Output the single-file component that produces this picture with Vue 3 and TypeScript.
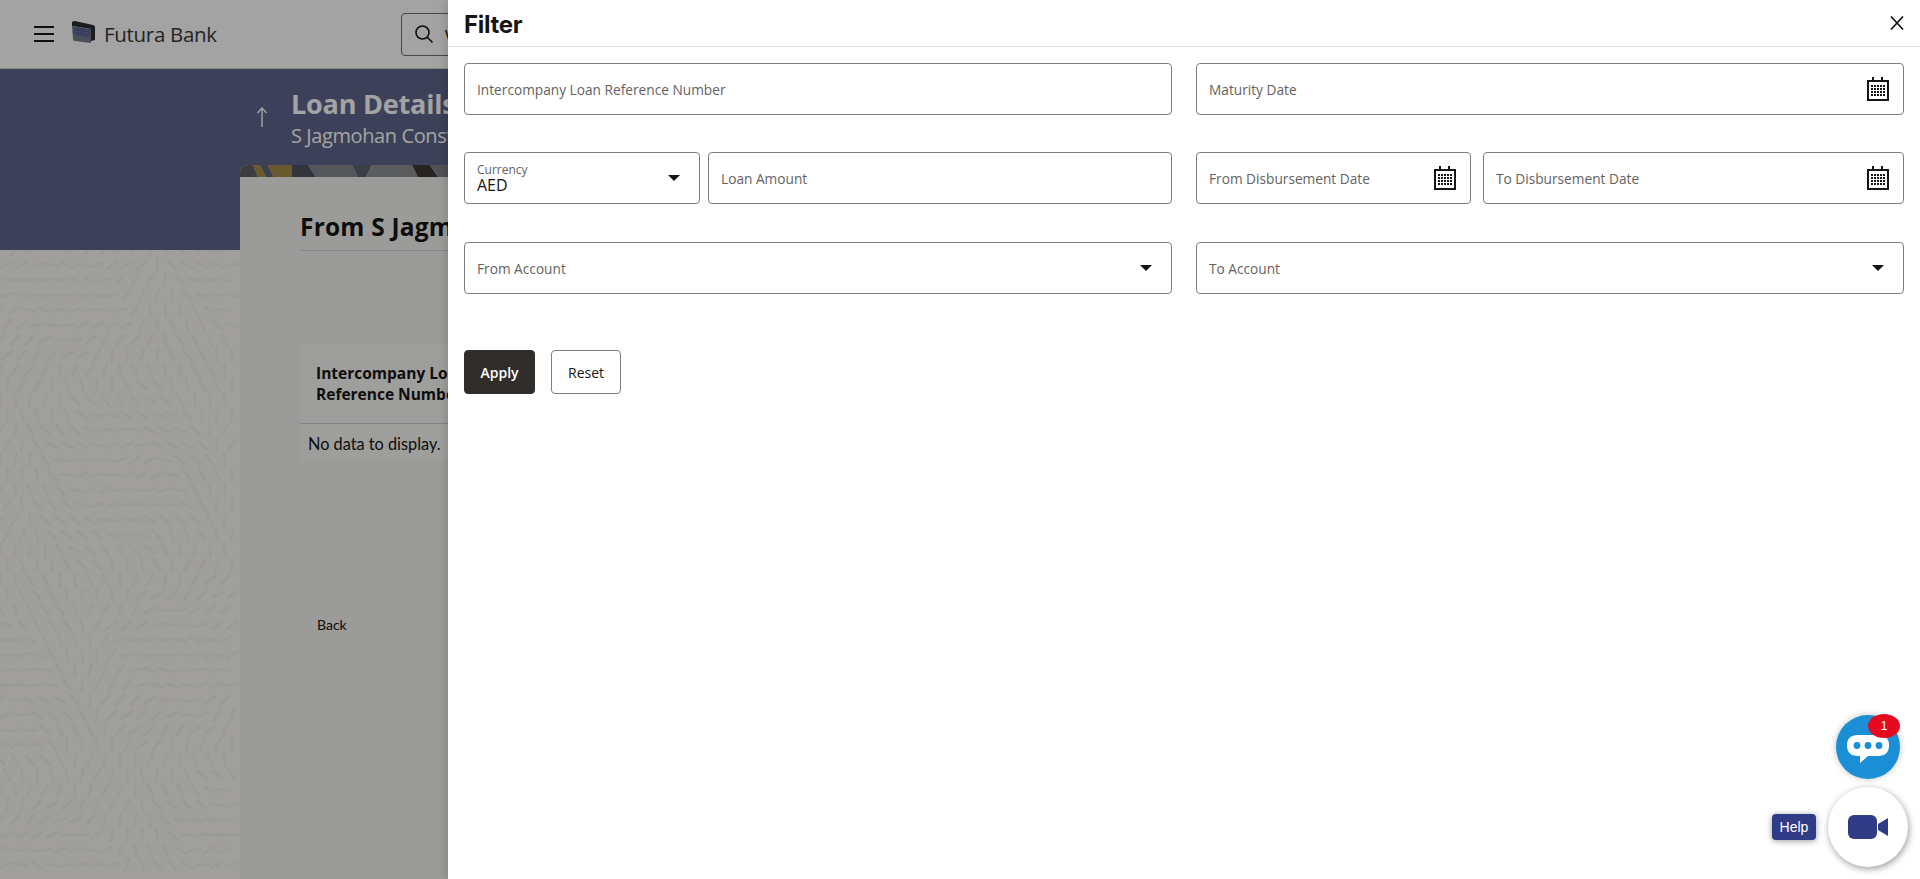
<script setup lang="ts">
const dots: number[][] = [];
for (const y of [8, 11, 14, 17]) for (const x of [4, 7, 10, 13, 16]) dots.push([x, y]);
const logoDots: number[][] = [];
for (let r = 0; r < 4; r++) for (let c = 0; c < 8; c++) logoDots.push([2 + c * 2.1 + (r % 2), 8 + r * 2 + c * 0.3]);
const stripes = [
  { p: '0,0 13,0 18,12 0,12', c: '#5d6069' },
  { p: '13,0 20,0 26,12 18,12', c: '#a68c4a' },
  { p: '20,0 28,0 34,12 26,12', c: '#5f6572' },
  { p: '28,0 52,0 52,12 34,12', c: '#a68c4a' },
  { p: '52,0 68,0 76,12 52,12', c: '#50545f' },
  { p: '68,0 112,0 118,12 76,12', c: '#85878c' },
  { p: '112,0 132,0 126,12 118,12', c: '#5e626d' },
  { p: '132,0 172,0 178,12 126,12', c: '#8f9094' },
  { p: '172,0 190,0 198,12 178,12', c: '#3c3835' },
  { p: '190,0 230,0 230,12 198,12', c: '#7e8085' }
];

// Swirling leaf texture of the page background: short strokes along a slowly turning flow field.
function buildTexture(width: number, height: number): string {
  const parts: string[] = [];
  const step = 15;
  let row = 0;
  for (let y = 0; y < height; y += step) {
    for (let x = (row % 2) * 7; x < width; x += step) {
      const jitter = Math.sin(x * 12.9 + y * 78.2) * 0.35;
      const a = 1.5 + 1.1 * Math.sin(x / 55 + y / 90) + 0.8 * Math.cos(y / 48 - x / 80) + jitter;
      const dx = Math.cos(a) * 6;
      const dy = Math.sin(a) * 6;
      parts.push(`M${(x - dx).toFixed(1)} ${(y - dy).toFixed(1)}l${(2 * dx).toFixed(1)} ${(2 * dy).toFixed(1)}`);
    }
    row++;
  }
  return parts.join('');
}
const texture = buildTexture(240, 630);
</script>

<template>
  <div class="page">
    <svg class="texture" viewBox="0 0 240 630" width="240" height="630">
      <path :d="texture" fill="none" stroke="#f2f1ed" stroke-width="3" stroke-linecap="round" />
    </svg>

    <header class="topbar">
      <div class="burger"><i></i><i></i><i></i></div>
      <svg class="logo" viewBox="0 0 24 24" width="24" height="24">
        <path d="M0 2 Q1 1 3 1 L21 5 Q23 5.5 23 7 L23 20 L19 21 L19 9 L0 6Z" fill="#2d2d30" />
        <path d="M0 6 L19 9 L19 23 L3 21 Q1 21 1 19Z" fill="#767b8a" />
        <circle v-for="d in logoDots" :key="d.join()" :cx="d[0]" :cy="d[1]" r=".8" fill="#3f4aa0" />
      </svg>
      <span class="brand">Futura Bank</span>
      <div class="search">
        <svg viewBox="0 0 20 20" width="20" height="20" fill="none" stroke="#161513" stroke-width="1.6">
          <circle cx="8.5" cy="8.5" r="6.5" />
          <path d="M13.2 13.2 L18.5 18.5" />
        </svg>
        <span class="search-text">What would you like to do today?</span>
      </div>
    </header>

    <section class="hero">
      <svg class="back-arrow" viewBox="0 0 12 20" width="12" height="20" fill="none" stroke="#fff" stroke-width="1.4">
        <path d="M6 20 V1 M1.5 6 L6 1 L10.5 6" />
      </svg>
      <div>
        <h1>Loan Details</h1>
        <p>S Jagmohan Constructions Pvt Ltd</p>
      </div>
    </section>

    <main class="card">
      <svg class="stripe" viewBox="0 0 230 12" width="230" height="12">
        <polygon v-for="s in stripes" :key="s.p" :points="s.p" :fill="s.c" />
      </svg>
      <div class="card-body">
        <h2>From S Jagmohan Constructions Pvt Ltd</h2>
        <table class="grid">
          <thead>
            <tr><th>Intercompany Loan<br />Reference Number</th></tr>
          </thead>
          <tbody>
            <tr><td>No data to display.</td></tr>
          </tbody>
        </table>
        <a class="back">Back</a>
      </div>
    </main>

    <div class="overlay"></div>

    <aside class="panel">
      <div class="panel-head">
        <span class="panel-title">Filter</span>
        <svg class="close" viewBox="0 0 14 14" width="14" height="14" fill="none" stroke="#161513" stroke-width="1.7">
          <path d="M1 0.5 L13 13.5 M13 0.5 L1 13.5" />
        </svg>
      </div>
      <form class="form">
        <div class="row">
          <label class="field"><span class="ph">Intercompany Loan Reference Number</span></label>
          <label class="field">
            <span class="ph">Maturity Date</span>
            <svg class="cal" viewBox="0 0 22 24" width="22" height="24">
              <path fill-rule="evenodd" d="M0 3 H5 V0 H7 V3 H14 V0 H16 V3 H22 V24 H0Z M2 5 V22 H20 V5Z" fill="#161513" />
              <rect v-for="d in dots" :key="d.join()" :x="d[0]" :y="d[1]" width="2" height="2" fill="#161513" />
            </svg>
          </label>
        </div>
        <div class="row">
          <div class="pair pair-left">
            <label class="field currency">
              <span class="small">Currency</span>
              <span class="value">AED</span>
              <i class="caret"></i>
            </label>
            <label class="field"><span class="ph">Loan Amount</span></label>
          </div>
          <div class="pair pair-right">
            <label class="field from-date">
              <span class="ph">From Disbursement Date</span>
              <svg class="cal" viewBox="0 0 22 24" width="22" height="24">
                <path fill-rule="evenodd" d="M0 3 H5 V0 H7 V3 H14 V0 H16 V3 H22 V24 H0Z M2 5 V22 H20 V5Z" fill="#161513" />
                <rect v-for="d in dots" :key="d.join()" :x="d[0]" :y="d[1]" width="2" height="2" fill="#161513" />
              </svg>
            </label>
            <label class="field">
              <span class="ph">To Disbursement Date</span>
              <svg class="cal" viewBox="0 0 22 24" width="22" height="24">
                <path fill-rule="evenodd" d="M0 3 H5 V0 H7 V3 H14 V0 H16 V3 H22 V24 H0Z M2 5 V22 H20 V5Z" fill="#161513" />
                <rect v-for="d in dots" :key="d.join()" :x="d[0]" :y="d[1]" width="2" height="2" fill="#161513" />
              </svg>
            </label>
          </div>
        </div>
        <div class="row">
          <label class="field"><span class="ph">From Account</span><i class="caret"></i></label>
          <label class="field"><span class="ph">To Account</span><i class="caret"></i></label>
        </div>
        <div class="actions">
          <button type="button" class="btn primary">Apply</button>
          <button type="button" class="btn reset">Reset</button>
        </div>
      </form>
    </aside>

    <div class="chat">
      <svg viewBox="0 0 42 32" width="42" height="32">
        <path d="M11 0 H31 Q42 0 42 10 Q42 21 31 21 H21 L13 28 V21 H11 Q0 21 0 10 Q0 0 11 0Z" fill="#fff" />
        <circle cx="10" cy="10.5" r="3.4" fill="#1a8fd6" />
        <circle cx="21" cy="10.5" r="3.4" fill="#1a8fd6" />
        <circle cx="32" cy="10.5" r="3.4" fill="#1a8fd6" />
      </svg>
      <span class="badge">1</span>
    </div>
    <div class="video">
      <svg viewBox="0 0 40 24" width="40" height="24">
        <rect x="0" y="0" width="29" height="24" rx="6" fill="#303c86" />
        <path d="M30 9 L40 3 V21 L30 15Z" fill="#303c86" />
      </svg>
    </div>
    <span class="help">Help</span>
  </div>
</template>

<style scoped>
.page {
  position: relative;
  isolation: isolate;
  width: 1920px;
  height: 879px;
  overflow: hidden;
  font-family: Lato, "Liberation Sans", sans-serif;
  color: #161513;
  background-color: #faf9f5;
}
.texture {
  position: absolute;
  left: 0;
  top: 250px;
  z-index: -1;
}
.topbar {
  height: 68px;
  display: flex;
  align-items: center;
  background: #fff;
  border-bottom: 1px solid #d8d8d8;
  padding-left: 34px;
}
.burger {
  width: 20px;
  display: flex;
  flex-direction: column;
  gap: 5px;
}
.burger i {
  display: block;
  height: 2px;
  background: #161513;
}
.logo {
  margin-left: 18px;
  margin-top: -4px;
}
.brand {
  margin-left: 8px;
  font-size: 20.5px;
  color: #3a3836;
  font-family: "Open Sans", sans-serif;
  letter-spacing: -0.3px;
}
.search {
  margin-left: 184px;
  width: 480px;
  height: 43px;
  box-sizing: border-box;
  border: 1px solid #6f6f6f;
  border-radius: 4px;
  display: flex;
  align-items: center;
  gap: 11px;
  padding-left: 12px;
  font-size: 14px;
}
.hero {
  height: 181px;
  box-sizing: border-box;
  background: #5f678b;
  padding: 18px 0 0 256px;
  display: flex;
  color: #fff;
}
.back-arrow {
  margin: 20px 23px 0 0;
}
.hero h1 {
  margin: 0;
  font-size: 27px;
  line-height: 34px;
  font-weight: 700;
  font-family: "Open Sans", sans-serif;
  letter-spacing: -0.2px;
}
.hero p {
  margin: 0;
  font-size: 20px;
  line-height: 30px;
  font-family: "Open Sans", sans-serif;
  letter-spacing: -0.4px;
}
.card {
  margin: -85px 0 0 240px;
  width: 1440px;
  height: 714px;
  background: #f2f2f0;
  border-radius: 8px 8px 0 0;
  overflow: hidden;
}
.stripe {
  display: block;
}
.card-body {
  padding: 31px 60px 0;
}
.card h2 {
  margin: 0;
  font-size: 24.5px;
  line-height: 38px;
  font-weight: 700;
  font-family: "Open Sans", sans-serif;
  letter-spacing: 0.2px;
  padding-bottom: 4px;
  border-bottom: 1px solid #d2d2d2;
  white-space: nowrap;
}
.grid {
  margin-top: 93px;
  border-collapse: collapse;
  background: #f7f7f5;
  font-size: 16.3px;
  width: 400px;
}
.grid th {
  text-align: left;
  height: 79px;
  padding: 0 16px;
  line-height: 21px;
  font-size: 15.5px;
  font-weight: 700;
  font-family: "Open Sans", sans-serif;
  border-bottom: 1px solid #cfcfcf;
}
.grid td {
  height: 37px;
  padding: 2px 8px 0;
  box-sizing: border-box;
}
.back {
  display: block;
  margin: 155px 0 0 17px;
  font-size: 14px;
}
.overlay {
  position: absolute;
  inset: 0;
  background: rgba(0, 0, 0, 0.36);
}
.panel {
  position: absolute;
  top: 0;
  right: 0;
  bottom: 0;
  width: 1472px;
  background: #fff;
  box-shadow: -3px 0 8px rgba(0, 0, 0, 0.12);
}
.panel-head {
  height: 46px;
  border-bottom: 1px solid #e4e4e4;
  padding: 0 16px;
  display: flex;
  align-items: center;
  justify-content: space-between;
}
.panel-title {
  font-size: 24px;
  font-weight: 700;
  font-family: Inter, sans-serif;
  letter-spacing: -0.3px;
  margin-top: 2px;
}
.close {
  margin-top: -1px;
}
.form {
  padding: 16px 16px 0 16px;
}
.row {
  display: grid;
  grid-template-columns: 1fr 1fr;
  column-gap: 24px;
  margin-bottom: 37px;
}
.row + .row {
  margin-bottom: 38px;
}
.row + .row + .row {
  margin-bottom: 0;
}
.pair {
  display: flex;
}
.pair-left {
  gap: 8px;
}
.pair-right {
  gap: 12px;
}
.pair .field {
  flex: 1;
}
.pair .currency {
  flex: 0 0 236px;
}
.pair .from-date {
  flex: 0 0 275px;
}
.field {
  position: relative;
  height: 52px;
  box-sizing: border-box;
  border: 1px solid #7f7f7f;
  border-radius: 4px;
  padding: 0 12px;
  display: flex;
  align-items: center;
  min-width: 0;
  background: #fff;
}
.ph {
  font-size: 13.7px;
  color: #636261;
  margin-top: 1px;
  font-family: "Open Sans", sans-serif;
}
.currency {
  flex-direction: column;
  align-items: flex-start;
  justify-content: center;
  font-family: "Open Sans", sans-serif;
}
.small {
  font-size: 12px;
  line-height: 15px;
  color: #636261;
  margin-top: -1px;
}
.value {
  font-size: 16px;
  line-height: 18px;
  margin-top: -1px;
}
.caret {
  position: absolute;
  right: 19px;
  top: 22px;
  width: 0;
  height: 0;
  border-left: 6px solid transparent;
  border-right: 6px solid transparent;
  border-top: 6px solid #161513;
}
.cal {
  position: absolute;
  right: 14px;
  top: 13px;
}
.actions {
  display: flex;
  gap: 16px;
  margin-top: 56px;
}
.btn {
  height: 44px;
  width: 71px;
  box-sizing: border-box;
  border: 1px solid #7f7f7f;
  border-radius: 4px;
  background: #fff;
  color: #161513;
  font: 500 14px "Open Sans", sans-serif;
  padding: 0;
}
.btn.reset {
  width: 70px;
}
.btn.primary {
  background: #312d2a;
  border-color: #312d2a;
  color: #fff;
  font-weight: 600;
}
.chat {
  position: absolute;
  left: 1836px;
  top: 715px;
  width: 64px;
  height: 64px;
  border-radius: 50%;
  background: #1a8fd6;
  box-shadow: 0 0 6px rgba(0, 0, 0, 0.25);
  display: flex;
  align-items: center;
  justify-content: center;
}
.chat svg {
  margin-top: 8px;
}
.badge {
  position: absolute;
  left: 32px;
  top: -1px;
  width: 32px;
  height: 24px;
  border-radius: 50%;
  background: #e60a1f;
  color: #fff;
  font: 12px/24px "Liberation Sans", sans-serif;
  text-align: center;
}
.video {
  position: absolute;
  left: 1828px;
  top: 787px;
  width: 80px;
  height: 80px;
  border-radius: 50%;
  background: #fff;
  box-shadow: 1px 2px 7px rgba(0, 0, 0, 0.4);
  display: flex;
  align-items: center;
  justify-content: center;
}
.help {
  position: absolute;
  left: 1772px;
  top: 814px;
  width: 44px;
  height: 26px;
  border-radius: 4px;
  background: #303c86;
  color: #fff;
  font: 14px/26px "Liberation Sans", sans-serif;
  text-align: center;
  box-shadow: 0 1px 6px rgba(0, 0, 0, 0.4);
}
</style>

<style>
html, body { margin: 0; overflow: hidden; }
</style>
